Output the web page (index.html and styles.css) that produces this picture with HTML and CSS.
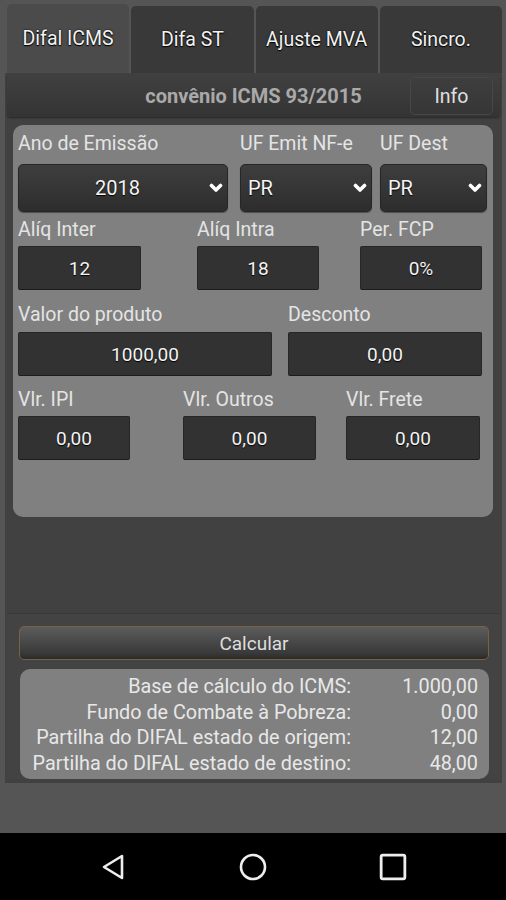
FILE: index.html
```html
<!DOCTYPE html>
<html lang="pt">
<head>
    <meta charset="UTF-8">
    <meta name="viewport" content="width=device-width, initial-scale=1.0">
    <title>Difal ICMS</title>
    <link rel="stylesheet" href="styles.css">
</head>
<body>
<div class="screen">
    <div class="tabs">
        <div class="tab active">Difal ICMS</div>
        <div class="tab">Difa ST</div>
        <div class="tab">Ajuste MVA</div>
        <div class="tab">Sincro.</div>
    </div>

    <div class="frame">
        <div class="header">
            <span class="header-title">convênio ICMS 93/2015</span>
            <button type="button" class="info-btn">Info</button>
        </div>

        <form class="panel">
            <div class="row row1">
                <div class="field w-ano">
                    <label>Ano de Emissão</label>
                    <div class="select center"><span>2018</span><svg class="chev" viewBox="0 0 14 10"><polyline points="2.5,2.5 7,7 11.5,2.5"/></svg></div>
                </div>
                <div class="field w-uf1">
                    <label>UF Emit NF-e</label>
                    <div class="select"><span>PR</span><svg class="chev" viewBox="0 0 14 10"><polyline points="2.5,2.5 7,7 11.5,2.5"/></svg></div>
                </div>
                <div class="field w-uf2">
                    <label>UF Dest</label>
                    <div class="select"><span>PR</span><svg class="chev" viewBox="0 0 14 10"><polyline points="2.5,2.5 7,7 11.5,2.5"/></svg></div>
                </div>
            </div>

            <div class="row row2">
                <div class="field w-inter">
                    <label>Alíq Inter</label>
                    <input type="text" value="12">
                </div>
                <div class="field w-intra">
                    <label>Alíq Intra</label>
                    <input type="text" value="18">
                </div>
                <div class="field w-fcp">
                    <label>Per. FCP</label>
                    <input type="text" value="0%">
                </div>
            </div>

            <div class="row row3">
                <div class="field w-valor">
                    <label>Valor do produto</label>
                    <input type="text" value="1000,00">
                </div>
                <div class="field w-desc">
                    <label>Desconto</label>
                    <input type="text" value="0,00">
                </div>
            </div>

            <div class="row row4">
                <div class="field w-ipi">
                    <label>Vlr. IPI</label>
                    <input type="text" value="0,00">
                </div>
                <div class="field w-outros">
                    <label>Vlr. Outros</label>
                    <input type="text" value="0,00">
                </div>
                <div class="field w-frete">
                    <label>Vlr. Frete</label>
                    <input type="text" value="0,00">
                </div>
            </div>
        </form>

        <div class="bottom">
            <button type="button" class="calc-btn">Calcular</button>
            <div class="results">
                <div class="res-row"><span class="res-label">Base de cálculo do ICMS:</span><span class="res-value">1.000,00</span></div>
                <div class="res-row"><span class="res-label">Fundo de Combate à Pobreza:</span><span class="res-value">0,00</span></div>
                <div class="res-row"><span class="res-label">Partilha do DIFAL estado de origem:</span><span class="res-value">12,00</span></div>
                <div class="res-row"><span class="res-label">Partilha do DIFAL estado de destino:</span><span class="res-value">48,00</span></div>
            </div>
        </div>
    </div>
</div>

<div class="navbar">
    <svg class="nav-icon" viewBox="0 0 26 28"><polygon points="22,3 22,25 4,14"/></svg>
    <svg class="nav-icon" viewBox="0 0 28 28"><circle cx="14" cy="14" r="12"/></svg>
    <svg class="nav-icon" viewBox="0 0 26 26"><rect x="2" y="2" width="22" height="22" rx="1.5"/></svg>
</div>
</body>
</html>
```

FILE: styles.css
```css
body {
    margin: 0;
    background-color: #555;
    font-family: Roboto, "Noto Sans", sans-serif;
    color: #e6e6e6;
}

.screen {
    height: 833px;
}

/* tabs */
.tabs {
    display: flex;
    align-items: flex-end;
    gap: 2px;
    height: 73px;
    padding: 0 4px 0 7px;
}

.tab {
    flex: 1;
    height: 67px;
    display: flex;
    align-items: center;
    justify-content: center;
    padding-bottom: 1px;
    box-sizing: border-box;
    background-color: #393939;
    border-radius: 5px 5px 0 0;
    font-size: 19.5px;
    color: #f2f2f2;
    text-shadow: 0 0 2px #000, 0 1px 1px #000;
}

.tab.active {
    height: 69px;
    padding-bottom: 0;
    background-color: #4b4b4b;
}

/* main frame */
.frame {
    margin: 0 4px 0 5px;
    padding: 2px 2px 4px;
    height: 710px;
    box-sizing: border-box;
    background-color: #414141;
    display: flex;
    flex-direction: column;
}

.header {
    position: relative;
    height: 42px;
    display: flex;
    align-items: center;
    justify-content: center;
    background: linear-gradient(#404040, #343434);
    border-radius: 3px;
    box-shadow: 0 1px 2px rgba(0, 0, 0, 0.4);
}

.header-title {
    font-size: 20px;
    font-weight: bold;
    color: #a9a9a9;
}

.info-btn {
    position: absolute;
    right: 7px;
    top: 2px;
    width: 83px;
    height: 38px;
    background: linear-gradient(#3e3e3e, #363636);
    border: 1px solid #474747;
    border-radius: 5px;
    font-family: inherit;
    font-size: 19.5px;
    color: #e0e0e0;
}

/* form panel */
.panel {
    margin: 8px 7px 0 6px;
    padding: 8px 6px 57px 5px;
    background-color: #808080;
    border-radius: 10px;
}

.row {
    display: flex;
}

.row2 { margin-top: 7px; }
.row3 { margin-top: 14px; }
.row4 { margin-top: 13px; }

.field label {
    display: block;
    height: 22px;
    line-height: 22px;
    font-size: 19.5px;
    color: #e4e4e4;
    white-space: nowrap;
}

.w-ano { width: 210px; }
.w-uf1 { width: 132px; margin-left: 12px; }
.w-uf2 { width: 107px; margin-left: 8px; }

.w-inter { width: 123px; }
.w-intra { width: 122px; margin-left: 56px; }
.w-fcp { width: 122px; margin-left: 41px; }

.w-valor { width: 254px; }
.w-desc { width: 194px; margin-left: 16px; }

.w-ipi { width: 112px; }
.w-outros { width: 133px; margin-left: 53px; }
.w-frete { width: 134px; margin-left: 30px; }

.select {
    margin-top: 9px;
    height: 48px;
    display: flex;
    align-items: center;
    padding: 0 4px 0 7px;
    box-sizing: border-box;
    background: linear-gradient(#3e3e3e, #2d2d2d);
    border: 1px solid #262626;
    border-radius: 5px;
    box-shadow: 0 1px 1px rgba(0, 0, 0, 0.4);
    font-size: 20px;
    color: #f4f4f4;
    text-shadow: 0 1px 1px #000;
}

.select span {
    flex: 1;
}

.select.center span {
    text-align: center;
}

.chev {
    width: 14px;
    height: 10px;
}

.chev polyline {
    fill: none;
    stroke: #fff;
    stroke-width: 3.6;
    stroke-linecap: round;
    stroke-linejoin: round;
}

.field input {
    display: block;
    margin-top: 5px;
    width: 100%;
    height: 44px;
    box-sizing: border-box;
    background-color: #323232;
    border: 1px solid #262626;
    border-bottom-color: #1c1c1c;
    border-radius: 2px;
    font-family: inherit;
    font-size: 19px;
    text-align: center;
    color: #f4f4f4;
    text-shadow: 0 1px 1px #000;
}

.row3 input {
    margin-top: 6px;
}

/* bottom section */
.bottom {
    margin-top: auto;
    border-top: 1px solid #383838;
    background-color: #434343;
    padding: 12px 11px 0 12px;
}

.calc-btn {
    display: block;
    width: 100%;
    height: 34px;
    background: linear-gradient(#5c5c5c, #3a3a3a 80%, #2a2a2a);
    border: 1px solid #7c6040;
    border-radius: 5px;
    font-family: inherit;
    font-size: 19px;
    color: #dedede;
}

.results {
    margin-top: 9px;
    margin-left: 1px;
    padding: 5px 11px 3px 0;
    background-color: #808080;
    border-radius: 10px;
}

.res-row {
    display: flex;
    justify-content: flex-end;
    height: 25.5px;
    line-height: 25.5px;
    font-size: 19.8px;
    color: #e8e8e8;
}

.res-value {
    width: 127px;
    text-align: right;
}

/* android nav bar */
.navbar {
    height: 67px;
    background-color: #000;
    display: flex;
    align-items: center;
    justify-content: center;
    gap: 112px;
}

.nav-icon {
    width: 28px;
    height: 28px;
}

.nav-icon polygon,
.nav-icon circle,
.nav-icon rect {
    fill: none;
    stroke: #eee;
    stroke-width: 2.6;
    stroke-linejoin: round;
}
```
